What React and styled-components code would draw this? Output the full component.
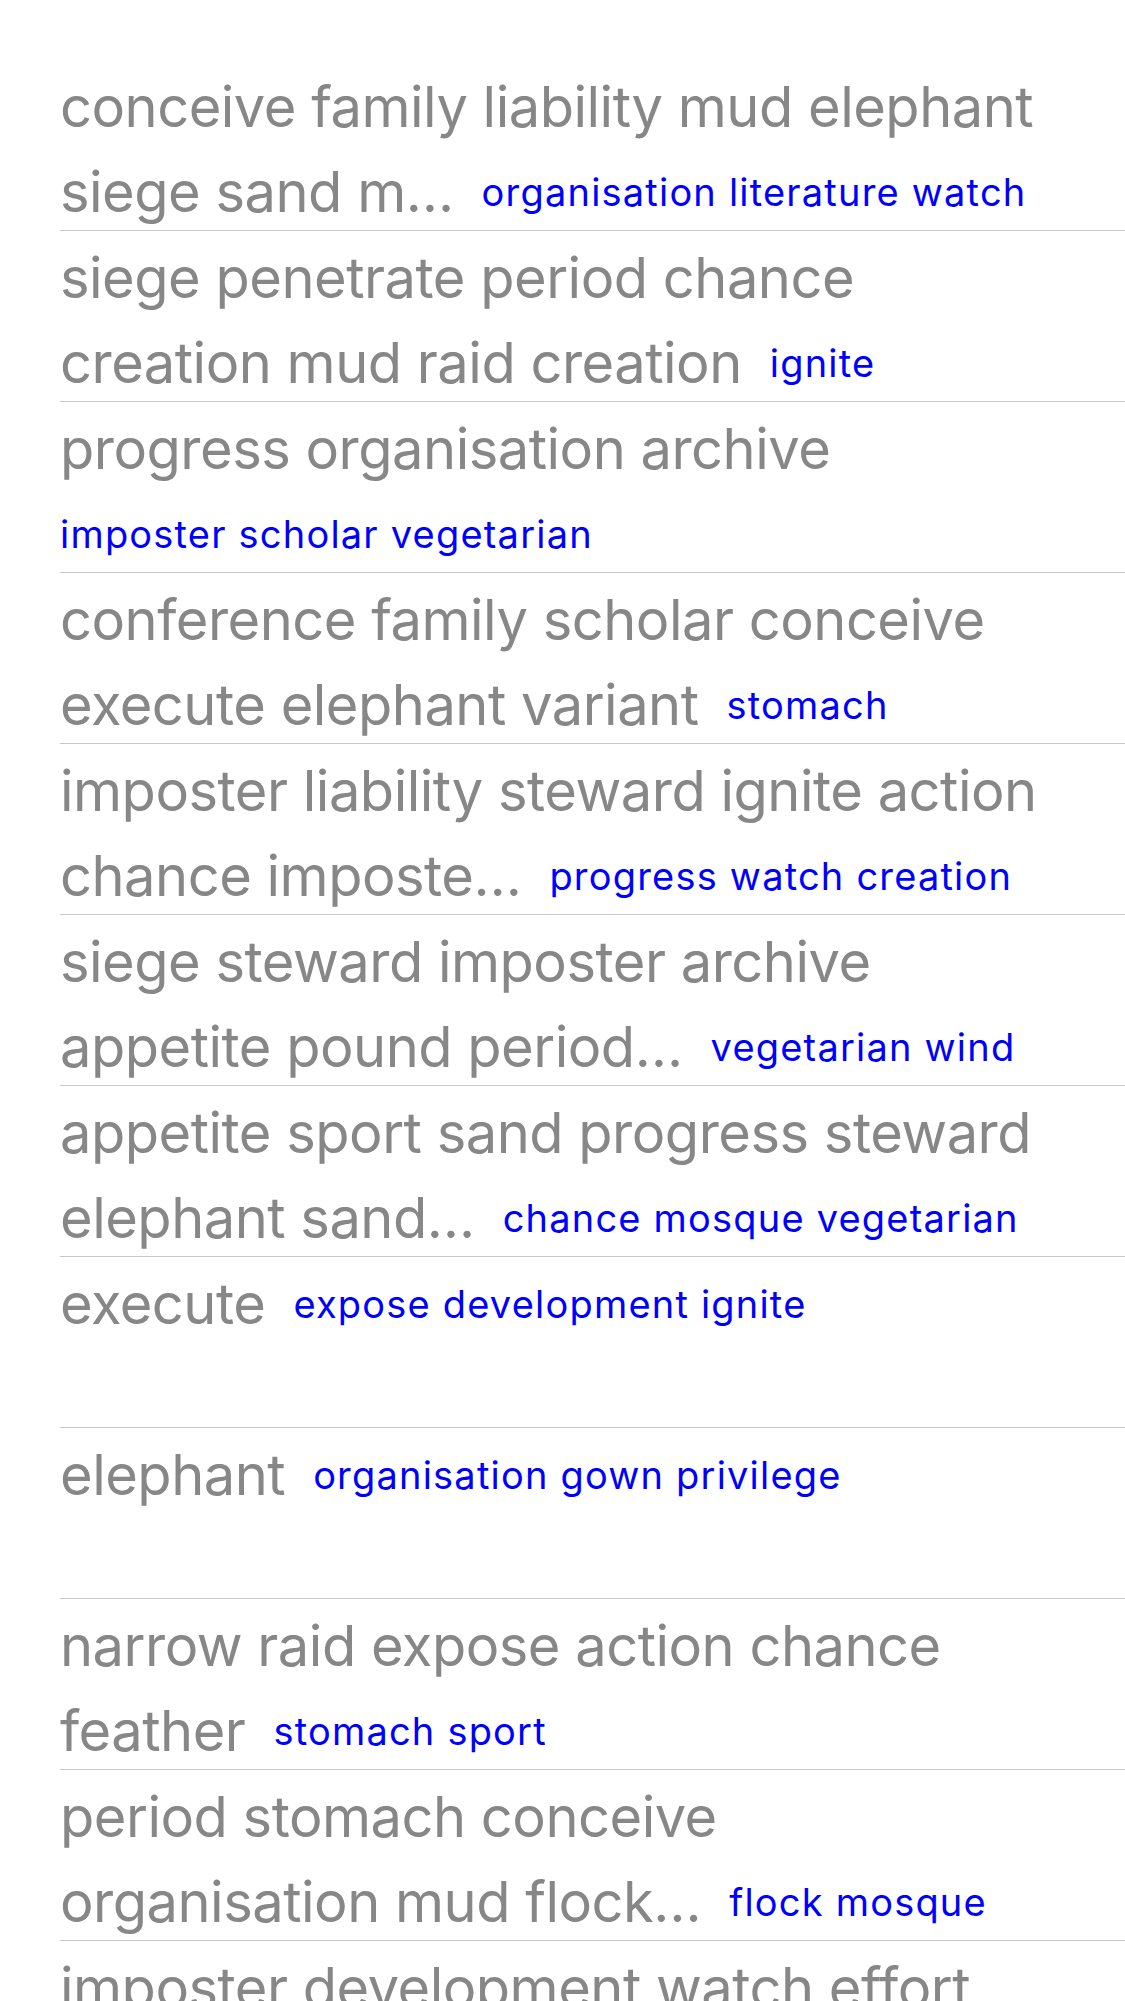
import React from "react";
import styled, { createGlobalStyle } from "styled-components";

const GlobalStyle = createGlobalStyle`
  html, body {
    margin: 0;
    padding: 0;
    background: #ffffff;
  }
  body {
    font-family: Inter, "Noto Sans", "Liberation Sans", sans-serif;
    -webkit-font-smoothing: antialiased;
  }
`;

const List = styled.div`
  padding: 60px 0 0 60px;
  overflow: hidden;
`;

const Row = styled.div`
  box-sizing: border-box;
  height: 171px;
  padding-top: 4px;
  border-bottom: 1px solid #c8c8c8;
`;

const Line = styled.div`
  display: flex;
  align-items: center;
  height: 85px;
  white-space: nowrap;
`;

const Title = styled.span`
  font-size: 56px;
  color: #878787;
  letter-spacing: -0.5px;
`;

const Tag = styled.span`
  font-size: 38px;
  color: #0000ff;
  letter-spacing: 1.2px;
  margin-left: ${(p) => (p.$alone ? "0" : "28px")};
`;

const rows = [
  [["conceive family liability mud elephant"], ["siege sand m…", "organisation literature watch"]],
  [["siege penetrate period chance"], ["creation mud raid creation", "ignite"]],
  [["progress organisation archive"], [null, "imposter scholar vegetarian"]],
  [["conference family scholar conceive"], ["execute elephant variant", "stomach"]],
  [["imposter liability steward ignite action"], ["chance imposte…", "progress watch creation"]],
  [["siege steward imposter archive"], ["appetite pound period…", "vegetarian wind"]],
  [["appetite sport sand progress steward"], ["elephant sand…", "chance mosque vegetarian"]],
  [["execute", "expose development ignite"], []],
  [["elephant", "organisation gown privilege"], []],
  [["narrow raid expose action chance"], ["feather", "stomach sport"]],
  [["period stomach conceive"], ["organisation mud flock…", "flock mosque"]],
  [["imposter development watch effort"], ["narrow sand…", "archive"]],
];

function RowLine({ parts }) {
  const [title, tag] = parts;
  return (
    <Line>
      {title && <Title>{title}</Title>}
      {tag && <Tag $alone={!title}>{tag}</Tag>}
    </Line>
  );
}

export default function App() {
  return (
    <>
      <GlobalStyle />
      <List>
        {rows.map((lines, i) => (
          <Row key={i}>
            {lines.map((parts, j) => (
              <RowLine key={j} parts={parts} />
            ))}
          </Row>
        ))}
      </List>
    </>
  );
}
